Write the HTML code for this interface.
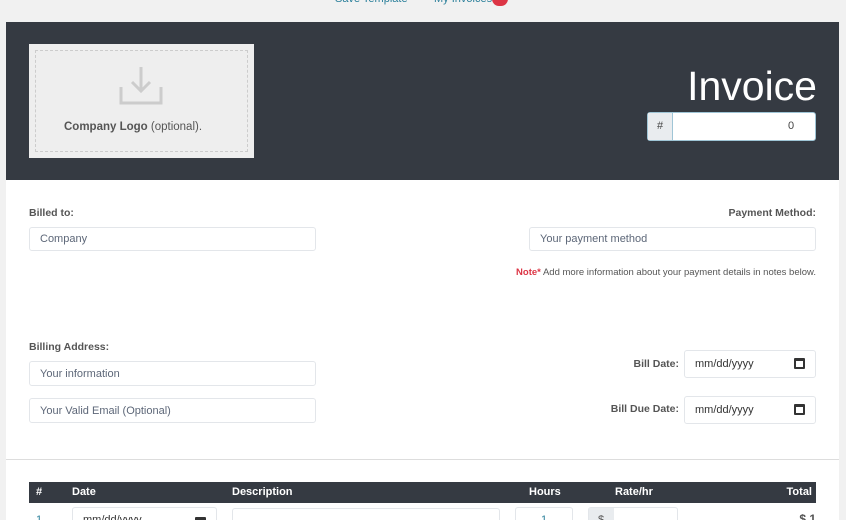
<!DOCTYPE html>
<html style="height:520px;overflow:hidden"><head><style>
*{box-sizing:border-box;margin:0;padding:0}
body{width:846px;height:520px;overflow:hidden;background:#f1f1f1;font-family:"Liberation Sans",sans-serif;position:relative}
.a{position:absolute}
.card{left:6px;top:22px;width:833px;height:498px;background:#fff}
.hdr{left:6px;top:22px;width:833px;height:158px;background:#353a42}
.inp{position:absolute;background:#fff;border:1px solid #e3e6ea;border-radius:3px;font-size:11px;color:#5d6778;padding-left:10px;display:flex;align-items:center}
.lbl{position:absolute;font-size:10.5px;font-weight:bold;color:#555}
.th{position:absolute;top:486px;font-size:11px;font-weight:bold;color:#fff}
.cal{position:absolute;right:10px;top:50%;margin-top:-6px;width:11px;height:11px;border:2px solid #333;border-top-width:3px;border-radius:1px}
</style></head><body>
<div class="a" style="left:335px;top:-7px;font-size:11px;color:#2a7f9a">Save Template</div>
<div class="a" style="left:434px;top:-7px;font-size:11px;color:#2a7f9a">My Invoices</div>
<div class="a" style="left:492px;top:-8px;width:16px;height:14px;border-radius:8px;background:#dc3545"></div>
<div class="a card"></div>
<div class="a hdr"></div>
<div class="a" style="left:29px;top:44px;width:225px;height:114px;background:#eee"></div>
<div class="a" style="left:35px;top:50px;width:213px;height:102px;border:1px dashed #ccc"></div>
<svg class="a" style="left:118px;top:66px" width="46" height="40" viewBox="0 0 46 40"><path d="M23 1V24M14 16L23 25L32 16M3 21V37H43V21" fill="none" stroke="#ccc" stroke-width="3"/></svg>
<div class="a" style="left:64px;top:121px;font-size:11.5px;color:#555"><b>Company Logo</b> (optional).</div>
<div class="a" style="right:29px;top:62px;font-size:41px;color:#fff;line-height:48px">Invoice</div>
<div class="a" style="left:647px;top:112px;width:169px;height:29px;border:1px solid #9fc5d6;border-radius:3px;background:#fff"></div>
<div class="a" style="left:648px;top:113px;width:25px;height:27px;background:#e9ecef;border-right:1px solid #9fc5d6;font-size:11px;color:#444;text-align:center;line-height:27px">#</div>
<div class="a" style="left:788px;top:120px;font-size:11px;color:#444">0</div>

<div class="lbl" style="left:29px;top:207px">Billed to:</div>
<div class="inp" style="left:29px;top:227px;width:287px;height:24px">Company</div>
<div class="lbl" style="right:30px;top:207px">Payment Method:</div>
<div class="inp" style="left:529px;top:227px;width:287px;height:24px">Your payment method</div>
<div class="a" style="right:30px;top:267px;font-size:9.5px;color:#555"><b style="color:#dc3545">Note*</b> Add more information about your payment details in notes below.</div>

<div class="lbl" style="left:29px;top:341px">Billing Address:</div>
<div class="inp" style="left:29px;top:361px;width:287px;height:25px">Your information</div>
<div class="inp" style="left:29px;top:398px;width:287px;height:25px">Your Valid Email (Optional)</div>
<div class="lbl" style="right:167px;top:358px">Bill Date:</div>
<div class="inp" style="left:684px;top:350px;width:132px;height:28px;color:#333">mm/dd/yyyy<span class="cal"></span></div>
<div class="lbl" style="right:167px;top:403px">Bill Due Date:</div>
<div class="inp" style="left:684px;top:396px;width:132px;height:28px;color:#333">mm/dd/yyyy<span class="cal"></span></div>

<div class="a" style="left:6px;top:459px;width:833px;height:1px;background:#ddd"></div>
<div class="a" style="left:29px;top:482px;width:787px;height:21px;background:#353a42"></div>
<div class="th" style="left:36px">#</div>
<div class="th" style="left:72px">Date</div>
<div class="th" style="left:232px">Description</div>
<div class="th" style="left:529px">Hours</div>
<div class="th" style="left:615px">Rate/hr</div>
<div class="th" style="right:34px">Total</div>
<div class="a" style="left:36px;top:514px;font-size:11px;color:#2a7f9a">1</div>
<div class="inp" style="left:72px;top:507px;width:145px;height:26px;color:#333;align-items:flex-start;padding-top:6px">mm/dd/yyyy<span class="cal" style="top:9px;margin:0"></span></div>
<div class="inp" style="left:232px;top:508px;width:268px;height:26px"></div>
<div class="inp" style="left:515px;top:507px;width:58px;height:26px;justify-content:center;color:#2a7f9a;padding:6px 0 0;align-items:flex-start">1</div>
<div class="inp" style="left:588px;top:507px;width:90px;height:26px;padding:0"></div>
<div class="a" style="left:589px;top:508px;width:25px;height:24px;background:#e9ecef;font-size:11px;color:#555;padding:6px 0 0 9px">$</div>
<div class="a" style="right:30px;top:512px;font-size:12px;font-weight:bold;color:#555">$ 1</div>
</body></html>
